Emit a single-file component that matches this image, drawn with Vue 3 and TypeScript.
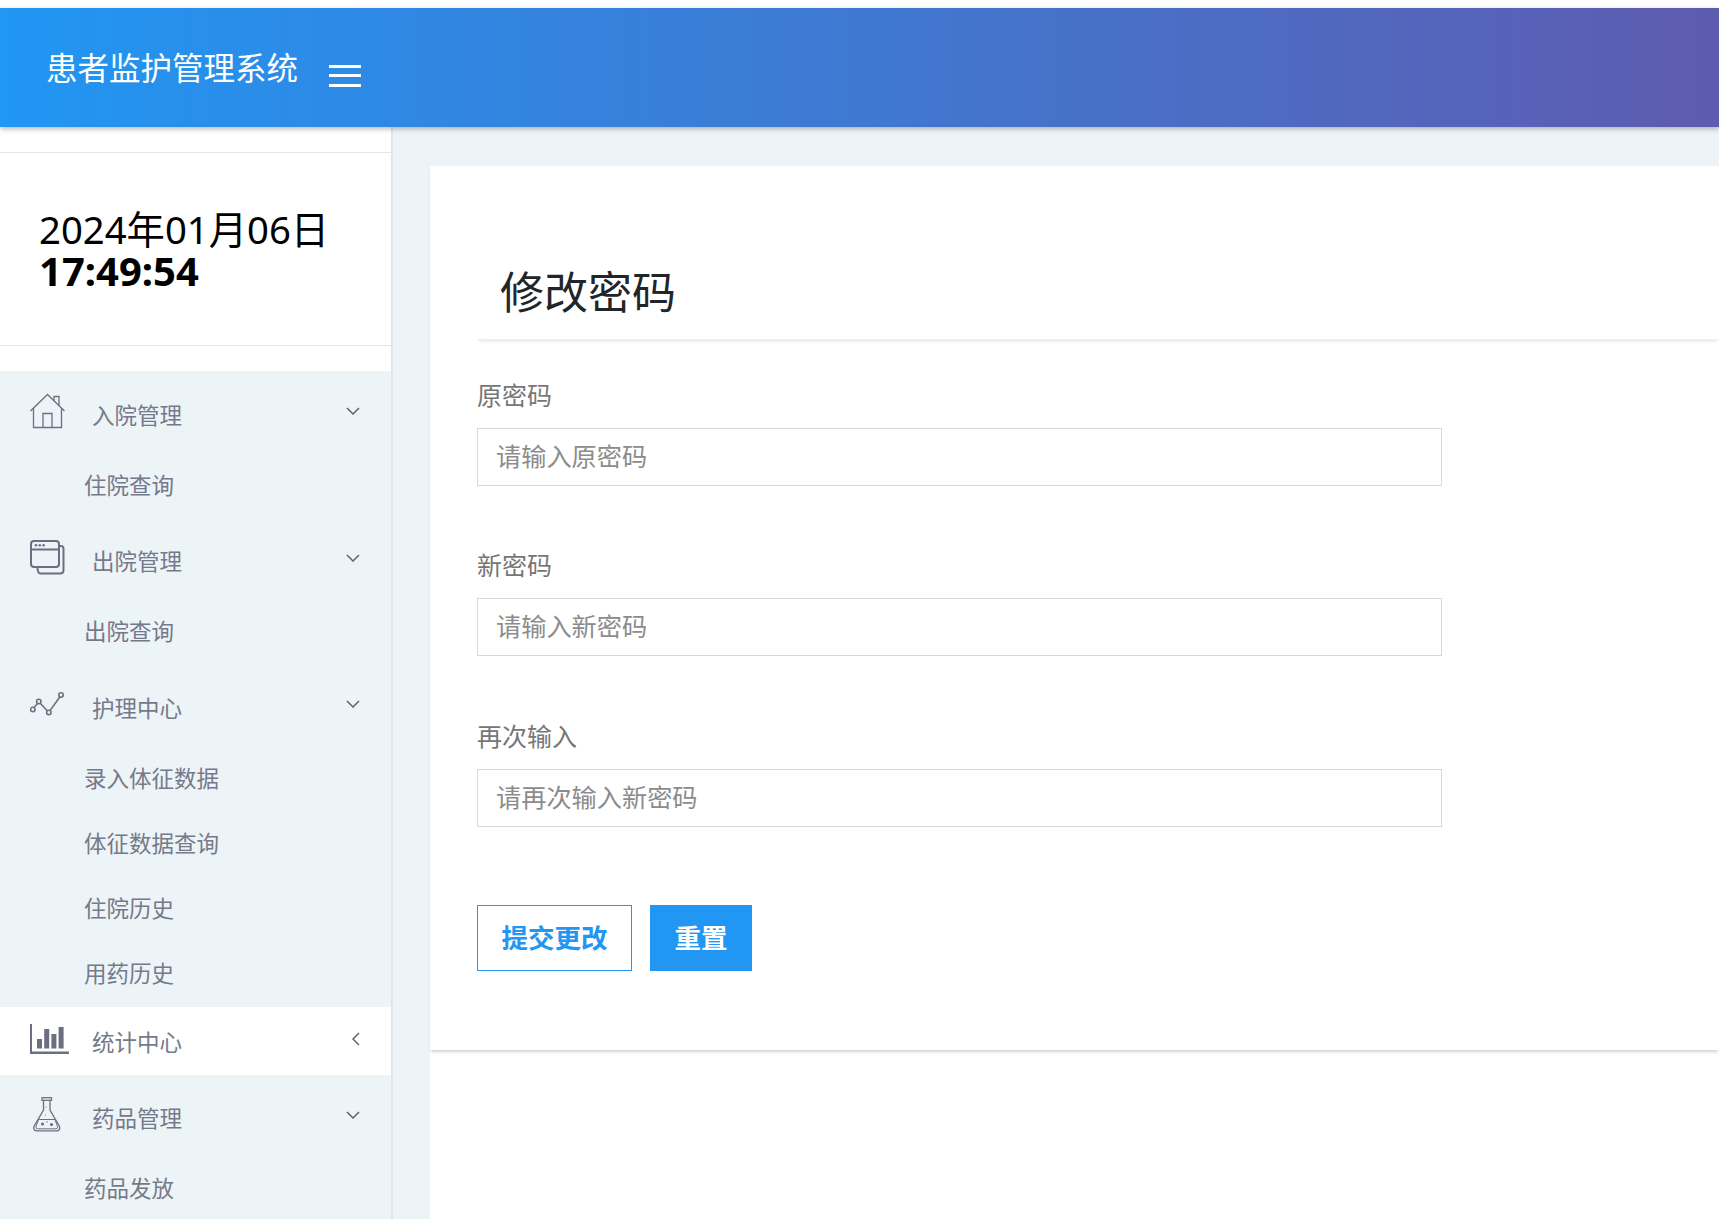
<script setup lang="ts">
interface MenuGroup {
  label: string
  icon: 'house' | 'window' | 'trend' | 'bars' | 'flask'
  open: boolean
  items: string[]
}

interface PasswordField {
  label: string
  placeholder: string
}

const menu: MenuGroup[] = [
  { label: '入院管理', icon: 'house', open: true, items: ['住院查询'] },
  { label: '出院管理', icon: 'window', open: true, items: ['出院查询'] },
  { label: '护理中心', icon: 'trend', open: true, items: ['录入体征数据', '体征数据查询', '住院历史', '用药历史'] },
  { label: '统计中心', icon: 'bars', open: false, items: [] },
  { label: '药品管理', icon: 'flask', open: true, items: ['药品发放'] },
]

const fields: PasswordField[] = [
  { label: '原密码', placeholder: '请输入原密码' },
  { label: '新密码', placeholder: '请输入新密码' },
  { label: '再次输入', placeholder: '请再次输入新密码' },
]
</script>

<template>
  <div class="app-shell">
    <header class="topbar">
      <span class="brand">患者监护管理系统</span>
      <button class="burger" type="button" aria-label="menu">
        <span></span>
        <span></span>
        <span></span>
      </button>
    </header>

    <div class="body-row">
      <aside class="sidebar">
        <div class="clock">
          <div class="clock-date">2024年01月06日</div>
          <div class="clock-time">17:49:54</div>
        </div>

        <nav class="menu">
          <div v-for="group in menu" :key="group.label" class="group" :class="{ open: group.open }">
            <div class="group-head">
              <span class="group-icon">
                <svg v-if="group.icon === 'house'" width="35" height="36" viewBox="0 0 35 36" fill="none" stroke="#6c6f80" stroke-width="1.3">
                  <path d="M0.5 18 L17.5 1.5 L34.5 18" />
                  <path d="M3.5 15 V34.5 H31.5 V15" />
                  <path d="M13 34.5 V20.5 H22 V34.5" />
                  <path d="M24 8 V3.5 H29 V13" />
                </svg>
                <svg v-else-if="group.icon === 'window'" width="35" height="35" viewBox="0 0 35 35" fill="none" stroke="#6c6f80" stroke-width="2">
                  <rect x="1" y="1" width="28" height="26" rx="3" />
                  <path d="M1 9.5 H29" />
                  <path d="M29 6 H31 Q33.5 6 33.5 9 V30 Q33.5 33.5 30 33.5 H10.5 Q7.5 33.5 7.5 27" />
                  <circle cx="6" cy="5.2" r="1.3" fill="#6c6f80" stroke="none" />
                  <circle cx="9.8" cy="5.2" r="1.3" fill="#6c6f80" stroke="none" />
                  <circle cx="13.6" cy="5.2" r="1.3" fill="#6c6f80" stroke="none" />
                </svg>
                <svg v-else-if="group.icon === 'trend'" width="35" height="26" viewBox="0 0 35 26" fill="none" stroke="#6c6f80" stroke-width="1.6">
                  <circle cx="2.8" cy="18.5" r="2.2" />
                  <circle cx="8.8" cy="10.5" r="2.2" />
                  <circle cx="18.8" cy="21.5" r="2.2" />
                  <circle cx="31" cy="4" r="2.2" />
                  <path d="M4 16.6 L7.6 12.4 M10.2 12.2 L17.3 19.8 M20 19.6 L29.8 6" />
                </svg>
                <svg v-else-if="group.icon === 'bars'" width="39" height="30" viewBox="0 0 39 30" fill="#6c6f80">
                  <rect x="0" y="0" width="2" height="30" />
                  <rect x="0" y="27.5" width="39" height="2.5" />
                  <rect x="7" y="15" width="5" height="9.5" />
                  <rect x="14.2" y="5" width="5" height="19.5" />
                  <rect x="21.4" y="10" width="5" height="14.5" />
                  <rect x="28.6" y="3" width="5" height="21.5" />
                </svg>
                <svg v-else class="flask" width="28" height="35" viewBox="0 0 28 35" fill="none" stroke="#6c6f80" stroke-width="1.3">
                  <rect x="9" y="0.7" width="9.5" height="2.6" />
                  <path d="M10.5 3.5 V13 L1.2 29 Q-0.2 33.8 4 33.8 H23.5 Q27.8 33.8 26.3 29 L17 13 V3.5" />
                  <path d="M5.5 22.5 H22 L24.5 29.5 Q25 31.8 23 31.8 H4.5 Q2.5 31.8 3 29.5 Z" stroke-width="1" />
                  <circle cx="9.5" cy="27" r="1.6" fill="#6c6f80" stroke="none" />
                  <circle cx="18.5" cy="27.5" r="1.6" fill="#6c6f80" stroke="none" />
                  <circle cx="14" cy="25" r="0.7" fill="#6c6f80" stroke="none" />
                  <circle cx="13" cy="10" r="0.6" fill="#6c6f80" stroke="none" />
                  <circle cx="12.5" cy="18" r="0.6" fill="#6c6f80" stroke="none" />
                </svg>
              </span>
              <span class="group-label">{{ group.label }}</span>
              <svg v-if="group.open" class="chevron" width="14" height="8" viewBox="0 0 14 8" fill="none" stroke="#5f6272" stroke-width="1.5">
                <path d="M1 1 L7 7 L13 1" />
              </svg>
              <svg v-else class="chevron back" width="8" height="14" viewBox="0 0 8 14" fill="none" stroke="#5f6272" stroke-width="1.5">
                <path d="M7 1 L1 7 L7 13" />
              </svg>
            </div>
            <ul v-if="group.items.length" class="sub-list">
              <li v-for="item in group.items" :key="item">{{ item }}</li>
            </ul>
          </div>
        </nav>
      </aside>

      <main class="content">
        <section class="card">
          <h1 class="card-title">修改密码</h1>
          <form class="form" @submit.prevent>
            <div v-for="field in fields" :key="field.label" class="form-row">
              <label class="form-label">{{ field.label }}</label>
              <input class="form-input" type="password" :placeholder="field.placeholder" />
            </div>
            <div class="actions">
              <button class="btn btn-outline" type="submit">提交更改</button>
              <button class="btn btn-solid" type="reset">重置</button>
            </div>
          </form>
        </section>
      </main>
    </div>
  </div>
</template>

<style scoped>
.app-shell {
  display: flex;
  flex-direction: column;
  height: 1219px;
  padding-top: 8px;
  box-sizing: border-box;
  overflow: hidden;
  background: #fff;
  font-family: "Noto Sans", "Noto Sans CJK SC", sans-serif;
}

.topbar {
  position: relative;
  z-index: 2;
  flex: none;
  display: flex;
  align-items: center;
  height: 119px;
  padding-left: 46px;
  background: linear-gradient(90deg, #2196f3, #5e5bb0);
  box-shadow: 0 2px 5px rgba(0, 0, 0, 0.28);
}

.brand {
  width: 283px;
  margin-bottom: 4px;
  color: #fff;
  font-size: 31.5px;
  white-space: nowrap;
}

.burger {
  display: flex;
  flex-direction: column;
  gap: 6.5px;
  width: 32px;
  margin-top: 16px;
  padding: 0;
  border: 0;
  background: none;
}

.burger span {
  display: block;
  height: 3px;
  background: #fff;
}

.body-row {
  flex: 1;
  display: flex;
  min-height: 0;
}

.sidebar {
  flex: none;
  width: 391px;
  padding-top: 25px;
  border-right: 2px solid #dfe4e8;
  background: #fff;
}

.clock {
  display: flex;
  flex-direction: column;
  justify-content: center;
  height: 194px;
  padding: 1px 0 0 39px;
  box-sizing: border-box;
  border-top: 1.5px solid #e6e6e6;
  border-bottom: 1.5px solid #e6e6e6;
  color: #000;
  font-size: 38px;
  line-height: 41px;
}

.clock-date {
  font-size: 38.3px;
}

.clock-time {
  font-size: 40px;
  font-weight: 700;
}

.menu {
  margin-top: 25px;
  background: #ecf4f8;
  color: #767989;
}

.group.open {
  padding-top: 8px;
}

.group:not(.open) {
  background: #fff;
}

.group-head {
  display: flex;
  align-items: center;
  height: 68px;
  padding: 0 31px 0 30px;
  font-size: 22.5px;
}

.group-icon {
  flex: none;
  display: flex;
  width: 62px;
  margin-bottom: 4px;
}

.group-icon svg {
  display: block;
}

.flask {
  margin-left: 3px;
}

.group-label {
  margin-top: 2px;
}

.chevron {
  margin-left: auto;
  margin-bottom: 4px;
}

.chevron.back {
  margin-right: 0;
}

.sub-list {
  margin: 0;
  padding: 5.5px 0 0 84px;
  list-style: none;
}

.sub-list li {
  height: 65.2px;
  line-height: 65.2px;
  font-size: 22.5px;
}

.content {
  flex: 1;
  min-width: 0;
  border-top: 39px solid #ecf4f7;
  border-left: 37px solid #ecf4f7;
  background: #fff;
}

.card {
  height: 884px;
  padding-left: 47px;
  box-sizing: border-box;
  background: #fff;
  box-shadow: 0 3px 3px -1px rgba(0, 0, 0, 0.18);
}

.card-title {
  height: 174px;
  margin: 0;
  padding: 92px 0 0 23px;
  box-sizing: border-box;
  border-bottom: 1px solid #eee;
  box-shadow: 0 3px 3px -2px rgba(0, 0, 0, 0.12);
  color: #212529;
  font-size: 44px;
  font-weight: 400;
  line-height: 68px;
}

.form {
  padding-top: 40px;
}

.form-row {
  height: 170.3px;
}

.form-label {
  display: block;
  height: 48px;
  color: #767676;
  font-size: 25px;
  line-height: 31px;
}

.form-input {
  display: block;
  width: 965px;
  height: 58px;
  padding: 0 18px 2px;
  box-sizing: border-box;
  border: 1.5px solid #d9d9d9;
  border-radius: 0;
  outline: none;
  font-family: inherit;
  font-size: 25.2px;
}

.form-input::placeholder {
  color: #8c8c8c;
  opacity: 1;
}

.actions {
  display: flex;
  gap: 18px;
  margin-top: 14.5px;
}

.btn {
  height: 66px;
  padding: 0 0 3px;
  border: 1.5px solid #2196f3;
  border-radius: 0;
  font-family: inherit;
  font-size: 26.5px;
  font-weight: 700;
}

.btn-outline {
  width: 155px;
  background: #fff;
  color: #2196f3;
}

.btn-solid {
  width: 102px;
  background: #2196f3;
  color: #fff;
}
</style>
